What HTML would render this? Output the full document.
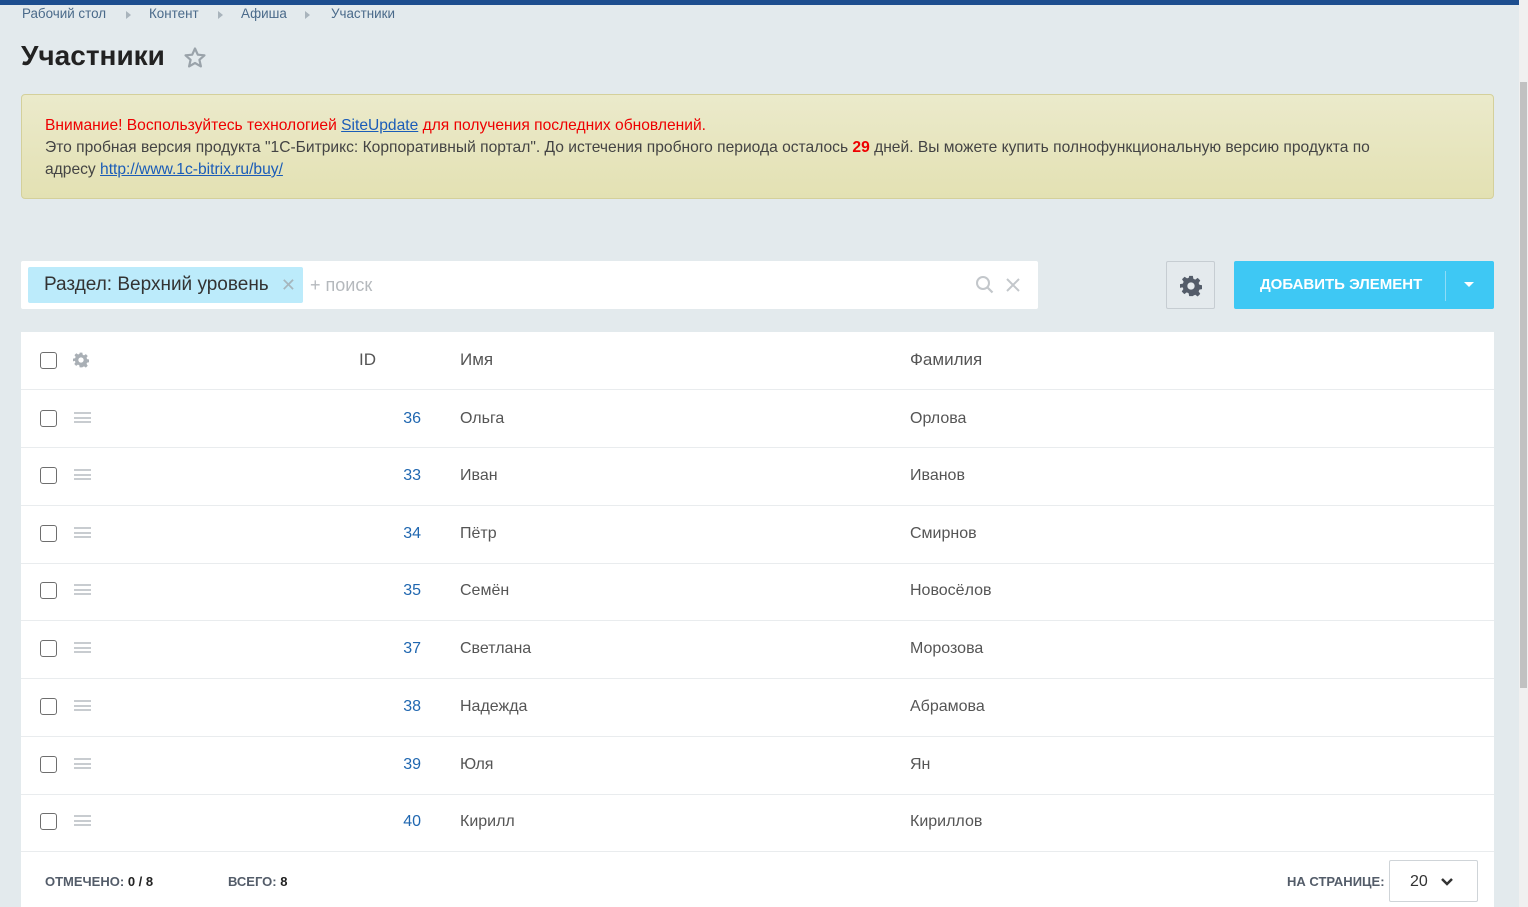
<!DOCTYPE html>
<html><head><meta charset="utf-8"><style>
*{box-sizing:border-box;margin:0;padding:0}
body{width:1528px;height:907px;overflow:hidden;background:#e3eaed;font-family:"Liberation Sans",sans-serif;position:relative;color:#333}
.top{position:absolute;left:0;top:0;width:1528px;height:5px;background:#1d4e8f}
.bc{position:absolute;top:6px;left:22px;font-size:13.4px;color:#4a6a8a}
.bc span{position:absolute;white-space:nowrap}
.arr{width:0;height:0;border-left:5px solid #a9b4bc;border-top:4px solid transparent;border-bottom:4px solid transparent;position:absolute}
h1{position:absolute;left:21px;top:40px;font-size:28px;font-weight:bold;color:#222}
.star{position:absolute;left:183px;top:46px}
.warn{position:absolute;left:21px;top:94px;width:1473px;height:105px;background:linear-gradient(#ebeacb,#e3e1b3);border:1px solid #d4d09b;border-radius:4px;padding:20px 23px;font-size:15.6px;line-height:22px;color:#444}
.warn .r{color:#e00}
.warn a{color:#1a5cb8;text-decoration:underline}
.search{position:absolute;left:21px;top:261px;width:1017px;height:48px;background:#fff;border-radius:2px}
.tag{position:absolute;left:7px;top:6px;width:275px;height:36px;background:#bcebfb;border-radius:2px;font-size:19px;line-height:36px;padding-left:16px;color:#333}
.tag b{position:absolute;right:7px;top:0;color:#a6b6bd;font-size:18px;font-weight:normal}
.ph{position:absolute;left:289px;top:14px;font-size:18px;color:#b5b9bd}
.gear{position:absolute;left:1166px;top:261px;width:49px;height:48px;border:1px solid #c6cdd2;border-radius:2px;background:#e4eaed}
.add{position:absolute;left:1234px;top:261px;width:260px;height:48px;background:#3ec8f4;border-radius:2px;color:#fff;font-weight:bold;font-size:15px;line-height:48px}
.add .t{position:absolute;left:26px}
.add .sep{position:absolute;left:211px;top:10px;width:1px;height:30px;background:#8edcf7}
.add .dd{position:absolute;left:230px;top:21px;border-top:5px solid #fff;border-left:5px solid transparent;border-right:5px solid transparent}
.grid{position:absolute;left:21px;top:332px;width:1473px;height:575px;background:#fff}
.row{position:absolute;left:0;width:1473px;border-bottom:1px solid #e9ecee;font-size:16px;color:#555}
.cb{position:absolute;left:19px;width:17px;height:17px;border:1.5px solid #6e6e6e;border-radius:3px;background:#fff}
.row span{position:absolute}
.id{color:#2067b0;right:1073px}
.burg{position:absolute;left:53px;width:17px;height:11px;border-top:2px solid #c8ccd0;border-bottom:2px solid #c8ccd0}
.burg:after{content:"";position:absolute;left:0;top:2.5px;width:17px;height:2px;background:#c8ccd0}
.foot{position:absolute;top:542px;font-size:13px;font-weight:bold;color:#535c69}
.foot i{font-style:normal;color:#222}
.sel{position:absolute;left:1368px;top:528px;width:89px;height:42px;border:1px solid #cfd4d8;border-radius:2px;font-size:16px;color:#333;line-height:42px;padding-left:20px}
.sb{position:absolute;left:1519px;top:0;width:9px;height:907px;background:#f0f0f0}
.sbt{position:absolute;left:1520px;top:82px;width:7px;height:606px;background:#c1c1c1}
</style></head><body>
<div class="top"></div>
<div class="bc">
<span style="left:0">Рабочий стол</span><div class="arr" style="left:104px;top:5px"></div>
<span style="left:127px">Контент</span><div class="arr" style="left:196px;top:5px"></div>
<span style="left:219px">Афиша</span><div class="arr" style="left:283px;top:5px"></div>
<span style="left:309px">Участники</span>
</div>
<h1>Участники</h1>
<svg class="star" width="24" height="24" viewBox="0 0 24 24"><path d="M12 2.5l2.8 6.2 6.7.6-5.1 4.5 1.5 6.6L12 17l-5.9 3.4 1.5-6.6-5.1-4.5 6.7-.6z" fill="none" stroke="#9aa3aa" stroke-width="2.2" stroke-linejoin="round"/></svg>
<div class="warn"><span class="r">Внимание! Воспользуйтесь технологией </span><a>SiteUpdate</a><span class="r"> для получения последних обновлений.</span><br>Это пробная версия продукта "1С-Битрикс: Корпоративный портал". До истечения пробного периода осталось <b class="r">29</b> дней. Вы можете купить полнофункциональную версию продукта по<br>адресу <a>http://www.1c-bitrix.ru/buy/</a></div>
<div class="search"><div class="tag">Раздел: Верхний уровень<b>✕</b></div><div class="ph">+ поиск</div>
<svg style="position:absolute;left:954px;top:14px" width="20" height="20" viewBox="0 0 20 20"><circle cx="8" cy="8" r="6" fill="none" stroke="#c3c7cb" stroke-width="2"/><path d="M12.5 12.5l5 5" stroke="#c3c7cb" stroke-width="2.2"/></svg>
<svg style="position:absolute;left:985px;top:17px" width="14" height="14" viewBox="0 0 14 14"><path d="M1 1l12 12M13 1L1 13" stroke="#c3c7cb" stroke-width="2"/></svg>
</div>
<div class="gear"><svg style="position:absolute;left:13px;top:13px" width="22" height="22" viewBox="0 0 24 24"><path fill="#535c69" d="M10 1h4l.6 3.1 2 .9 2.7-1.8 2.8 2.8-1.8 2.7.9 2 3.1.6v4l-3.1.6-.9 2 1.8 2.7-2.8 2.8-2.7-1.8-2 .9L14 23h-4l-.6-3.1-2-.9-2.7 1.8-2.8-2.8 1.8-2.7-.9-2L0 14v-4l3.1-.6.9-2-1.8-2.7 2.8-2.8 2.7 1.8 2-.9zM12 8a4 4 0 100 8 4 4 0 000-8z"/></svg></div>
<div class="add"><span class="t">ДОБАВИТЬ ЭЛЕМЕНТ</span><div class="sep"></div><div class="dd"></div></div>
<div class="grid">
<div class="row" style="top:0;height:58px"><div class="cb" style="top:20px"></div>
<svg style="position:absolute;left:52px;top:20px" width="16" height="16" viewBox="0 0 24 24"><path fill="#a9afb5" d="M10 1h4l.6 3.1 2 .9 2.7-1.8 2.8 2.8-1.8 2.7.9 2 3.1.6v4l-3.1.6-.9 2 1.8 2.7-2.8 2.8-2.7-1.8-2 .9L14 23h-4l-.6-3.1-2-.9-2.7 1.8-2.8-2.8 1.8-2.7-.9-2L0 14v-4l3.1-.6.9-2-1.8-2.7 2.8-2.8 2.7 1.8 2-.9zM12 8a4 4 0 100 8 4 4 0 000-8z"/></svg>
<span style="left:338px;top:18px;font-size:17px">ID</span><span style="left:439px;top:18px;font-size:17px">Имя</span><span style="left:889px;top:18px;font-size:17px">Фамилия</span></div>
<div class="row" style="top:58px;height:58px"><div class="cb" style="top:20px"></div><div class="burg" style="top:22px"></div><span class="id" style="top:20px">36</span><span style="left:439px;top:20px">Ольга</span><span style="left:889px;top:20px">Орлова</span></div>
<div class="row" style="top:116px;height:58px"><div class="cb" style="top:19px"></div><div class="burg" style="top:21px"></div><span class="id" style="top:19px">33</span><span style="left:439px;top:19px">Иван</span><span style="left:889px;top:19px">Иванов</span></div>
<div class="row" style="top:174px;height:58px"><div class="cb" style="top:19px"></div><div class="burg" style="top:21px"></div><span class="id" style="top:19px">34</span><span style="left:439px;top:19px">Пётр</span><span style="left:889px;top:19px">Смирнов</span></div>
<div class="row" style="top:232px;height:57px"><div class="cb" style="top:18px"></div><div class="burg" style="top:20px"></div><span class="id" style="top:18px">35</span><span style="left:439px;top:18px">Семён</span><span style="left:889px;top:18px">Новосёлов</span></div>
<div class="row" style="top:289px;height:58px"><div class="cb" style="top:19px"></div><div class="burg" style="top:21px"></div><span class="id" style="top:19px">37</span><span style="left:439px;top:19px">Светлана</span><span style="left:889px;top:19px">Морозова</span></div>
<div class="row" style="top:347px;height:58px"><div class="cb" style="top:19px"></div><div class="burg" style="top:21px"></div><span class="id" style="top:19px">38</span><span style="left:439px;top:19px">Надежда</span><span style="left:889px;top:19px">Абрамова</span></div>
<div class="row" style="top:405px;height:58px"><div class="cb" style="top:19px"></div><div class="burg" style="top:21px"></div><span class="id" style="top:19px">39</span><span style="left:439px;top:19px">Юля</span><span style="left:889px;top:19px">Ян</span></div>
<div class="row" style="top:463px;height:57px"><div class="cb" style="top:18px"></div><div class="burg" style="top:20px"></div><span class="id" style="top:18px">40</span><span style="left:439px;top:18px">Кирилл</span><span style="left:889px;top:18px">Кириллов</span></div>
<div class="foot" style="left:24px">ОТМЕЧЕНО: <i>0 / 8</i></div>
<div class="foot" style="left:207px">ВСЕГО: <i>8</i></div>
<div class="foot" style="left:1266px">НА СТРАНИЦЕ:</div>
<div class="sel">20<svg style="position:absolute;left:50px;top:16px" width="14" height="10" viewBox="0 0 14 10"><path d="M2 2l5 5 5-5" fill="none" stroke="#333" stroke-width="2.5"/></svg></div>
</div>
<div class="sb"></div><div class="sbt"></div>
</body></html>
